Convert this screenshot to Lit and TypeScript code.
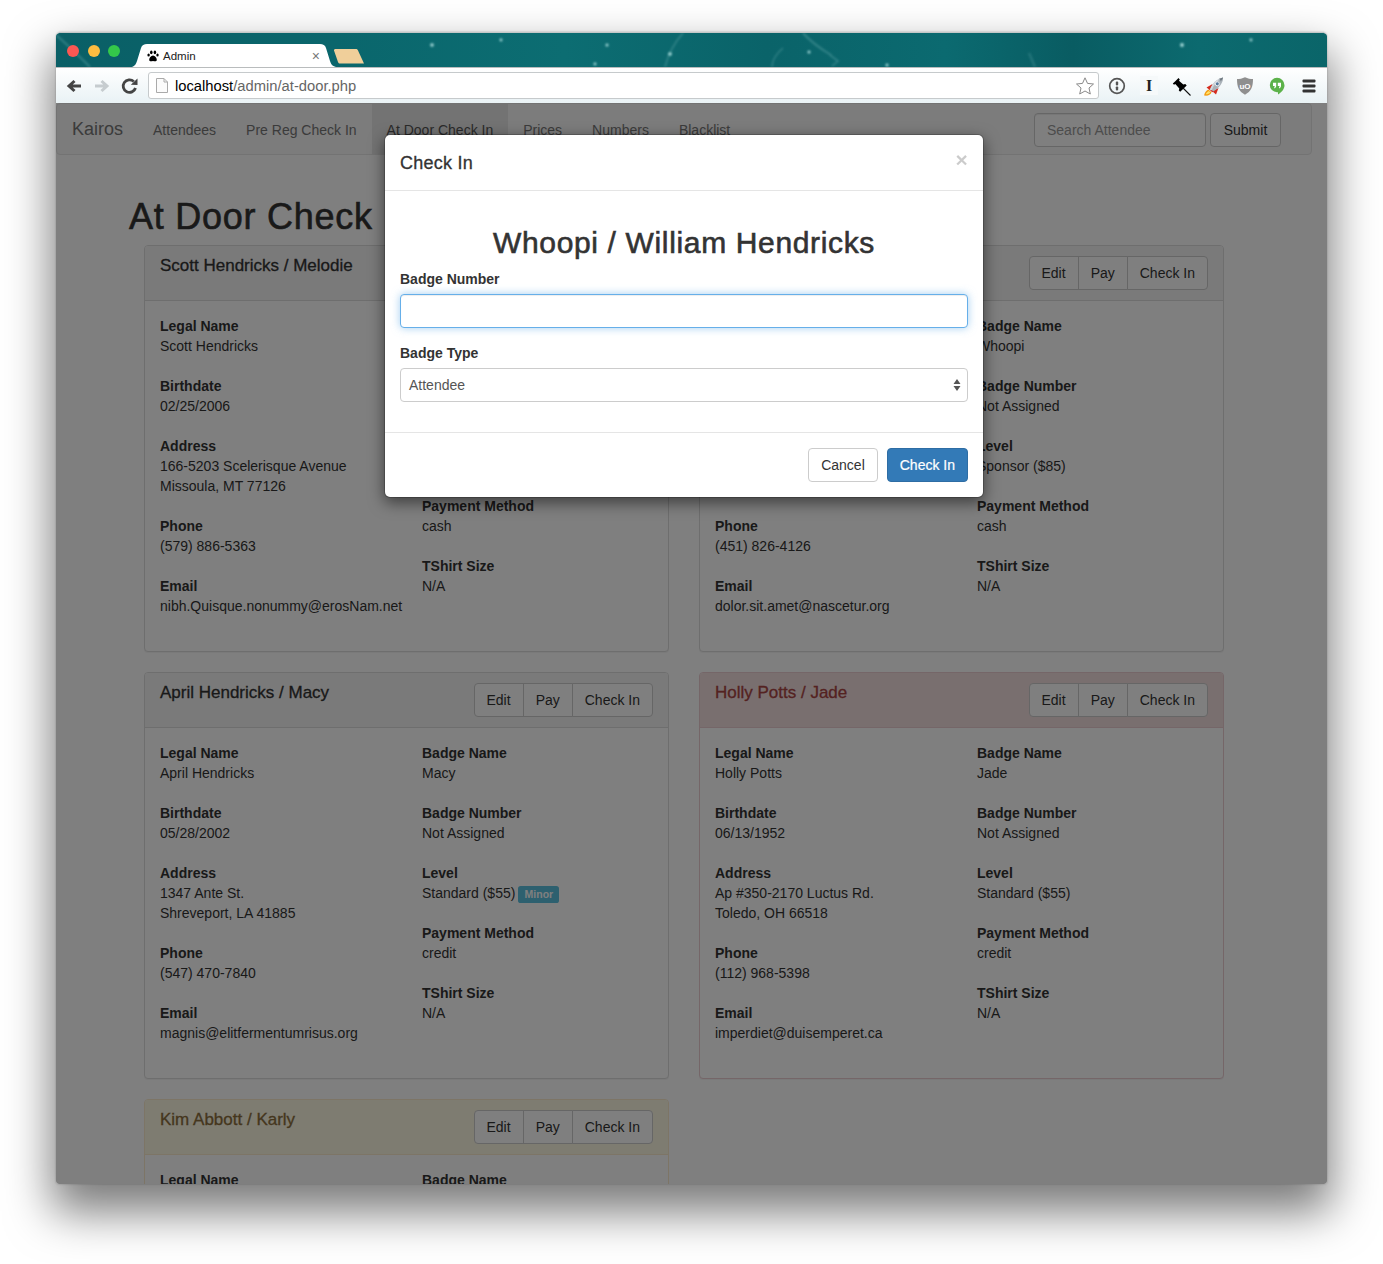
import { LitElement, html, css, svg } from 'lit';
import { customElement } from 'lit/decorators.js';

interface Person {
  title: string;
  tone?: 'danger' | 'warning';
  legal: string;
  birth: string;
  addr: string[];
  phone: string;
  email: string;
  badge: string;
  level: string;
  minor?: boolean;
  payment: string;
}

const PEOPLE: Person[] = [
  {
    title: 'Scott Hendricks / Melodie', legal: 'Scott Hendricks', birth: '02/25/2006',
    addr: ['166-5203 Scelerisque Avenue', 'Missoula, MT 77126'], phone: '(579) 886-5363',
    email: 'nibh.Quisque.nonummy@erosNam.net', badge: 'Melodie', level: 'Standard ($55)', payment: 'cash',
  },
  {
    title: 'William Hendricks / Whoopi', legal: 'William Hendricks', birth: '11/02/1984',
    addr: ['166-5203 Scelerisque Avenue', 'Missoula, MT 77126'], phone: '(451) 826-4126',
    email: 'dolor.sit.amet@nascetur.org', badge: 'Whoopi', level: 'Sponsor ($85)', payment: 'cash',
  },
  {
    title: 'April Hendricks / Macy', legal: 'April Hendricks', birth: '05/28/2002',
    addr: ['1347 Ante St.', 'Shreveport, LA 41885'], phone: '(547) 470-7840',
    email: 'magnis@elitfermentumrisus.org', badge: 'Macy', level: 'Standard ($55)', minor: true, payment: 'credit',
  },
  {
    title: 'Holly Potts / Jade', tone: 'danger', legal: 'Holly Potts', birth: '06/13/1952',
    addr: ['Ap #350-2170 Luctus Rd.', 'Toledo, OH 66518'], phone: '(112) 968-5398',
    email: 'imperdiet@duisemperet.ca', badge: 'Jade', level: 'Standard ($55)', payment: 'credit',
  },
  {
    title: 'Kim Abbott / Karly', tone: 'warning', legal: 'Kim Abbott', birth: '09/17/1990',
    addr: ['812 Nunc Road', 'Billings, MT 59101'], phone: '(406) 555-0148',
    email: 'kim.abbott@example.org', badge: 'Karly', level: 'Standard ($55)', payment: 'credit',
  },
];

const NAV = ['Attendees', 'Pre Reg Check In', 'At Door Check In', 'Prices', 'Numbers', 'Blacklist'];

const STARS: [number, number, number][] = [
  [376, 12, 1.8], [445, 7, 1.4], [551, 12, 1.5], [614, 21, 1.8], [539, 31, 1.4], [753, 19, 1.5],
  [831, 32, 1.5], [1126, 12, 1.9], [1195, 7, 1.4],
];

// the nebula wallpaper behind the tabs, roughly
const stripArt = svg`
  <defs>
    <linearGradient id="sky" x1="0" x2="1" y1="0" y2="0">
      <stop offset="0" stop-color="#0a5f66"/>
      <stop offset=".22" stop-color="#0a666c"/>
      <stop offset=".4" stop-color="#0c6d72"/>
      <stop offset=".56" stop-color="#0a6369"/>
      <stop offset=".7" stop-color="#0b6a70"/>
      <stop offset=".8" stop-color="#095c62"/>
      <stop offset=".9" stop-color="#0c6a6f"/>
      <stop offset="1" stop-color="#0a6569"/>
    </linearGradient>
    <filter id="soft"><feGaussianBlur stdDeviation="0.9"/></filter>
  </defs>
  <rect width="1271" height="34" fill="url(#sky)"/>
  <g fill="none" stroke="#6fb0b2" stroke-opacity=".4" filter="url(#soft)">
    <path d="M627 0C618 10 612 22 609 34" stroke-width="1.6"/>
    <path d="M747 0C755 9 765 16 775 22" stroke-width="2"/>
    <path d="M727 15C720 21 716 27 716 34" stroke-width="1.4"/>
    <path d="M774 22L782 28L776 33" stroke-width="1.6"/>
    <path d="M0 2C12 12 22 22 34 34" stroke-width="2"/>
    <path d="M973 20L979 34" stroke-width="2.5" stroke-opacity=".25"/>
  </g>
  <g fill="#a6dada" filter="url(#soft)">
    ${STARS.map(([x, y, r]) => svg`<circle cx=${x} cy=${y} r=${r}/>`)}
  </g>
`;

const ICONS = {
  back: svg`<path d="M17 10H6M10.500 5L5 10l5.500 5" fill="none" stroke="#444" stroke-width="3"/>`,
  forward: svg`<path d="M3 10h11M9.500 5L15 10l-5.500 5" fill="none" stroke="#c6cccf" stroke-width="3"/>`,
  reload: svg`<path d="M15.500 12a6.300 6.300 0 1 1-1.700-6.500" fill="none" stroke="#444" stroke-width="2.800"/><path d="M10.800 8.800L17.500 9V2.500z" fill="#444"/>`,
  star: svg`<path d="M10 1.800l2.500 5.600 6 .6-4.500 4 1.300 6L10 15l-5.300 3 1.300-6-4.500-4 6-.6z" fill="#fff" stroke="#8a8a8a" stroke-width="1"/>`,
  onepass: svg`<circle cx="10" cy="10" r="7.300" fill="none" stroke="#555" stroke-width="1.700"/><rect x="8.800" y="5.600" width="2.400" height="3.800" rx=".8" fill="#555"/><rect x="8.800" y="10.400" width="2.400" height="4" rx=".8" fill="#555"/>`,
  pin: svg`<path d="M4 5.500L7.500 2l1.300 1.400-.8 1.300 4.300 3.700 2-.4 1.400 1.400-6.500 6.400-1.400-1.400.5-2L4.300 8 3 8.800 1.800 7.500z" fill="#000"/><path d="M12 12l7.500 7.500" stroke="#111" stroke-width="1.100"/>`,
  rocket: svg`
    <path d="M1 19.500c.8-3.500 2.500-5.500 4.500-6l3 3c-1 2.500-3.500 3.500-7.500 3z" fill="#f39c12"/>
    <path d="M2.800 18.300c.7-1.800 1.700-2.800 3.200-3.300l1.300 1.500c-.8 1.200-2.200 1.800-4.500 1.800z" fill="#ffe066"/>
    <path d="M3.500 11.500L9.500 8l-1.500 7zM13 18.500L15.500 12l-6.500 3z" fill="#d62c1f"/>
    <path d="M7 13.500C9.500 7 13.500 3 20.500 1.300c-1 7-5 11-11 14.800z" fill="#aab2b9"/>
    <path d="M7 13.500C9.500 7 13.500 3 20.500 1.300 15 4 11 8 8.500 15z" fill="#d2d7db"/>
    <path d="M15.500 2.900c1.700.1 2 1.200 2.200 2.600L20.500 1.300z" fill="#6f7880"/>
    <circle cx="14.300" cy="7.800" r="2" fill="#55789c" stroke="#f2f4f5" stroke-width=".9"/>
    <path d="M8 14.500l1.900 1.300" stroke="#d62c1f" stroke-width="1.300"/>
  `,
  shield: svg`
    <path d="M10 1.300c2.700 1.300 5.400 1.800 8 1.800 0 7.500-1.700 12.500-8 15.600C3.700 15.600 2 10.600 2 3.100c2.600 0 5.300-.5 8-1.800z" fill="#8f8f8f"/>
    <text x="10" y="12.800" text-anchor="middle" font-family="Liberation Sans, sans-serif" font-weight="700" font-size="8" fill="#fff">uO</text>
  `,
  hangouts: svg`
    <path d="M10 1.800a7.500 7.500 0 0 1 7.500 7.500c0 4-3.300 7.400-6.500 9.200v-2.300h-1a7.200 7.200 0 0 1 0-14.400z" fill="#5cb24a"/>
    <path d="M6 6.800h3.200v3.300c0 1.200-.8 2.200-1.900 2.400v-1.700c.4-.1.600-.4.600-.8H6zM10.800 6.800H14v3.300c0 1.200-.8 2.200-1.900 2.400v-1.700c.4-.1.600-.4.600-.8h-1.900z" fill="#fff"/>
  `,
  menu: svg`<g fill="#333"><rect x="3.500" y="3.500" width="13" height="3" rx="1"/><rect x="3.500" y="8.500" width="13" height="3" rx="1"/><rect x="3.500" y="13.500" width="13" height="3" rx="1"/></g>`,
};

@customElement('app-root')
export class AppRoot extends LitElement {
  static styles = css`
    :host {
      display: block;
      width: 1383px;
      height: 1264px;
      overflow: hidden;
      background: #fff;
      font-family: 'Liberation Sans', Arial, sans-serif;
      font-size: 14px;
      line-height: 20px;
      color: #333;
    }
    * { box-sizing: border-box; }

    .window {
      width: 1271px;
      margin: 32px 0 0 56px;
      border-radius: 5px 5px 3px 3px;
      box-shadow: 0 24px 46px 4px rgba(0, 0, 0, 0.52), 0 0 2px rgba(0, 0, 0, 0.3);
      position: relative;
    }

    /* browser chrome */
    .strip {
      height: 35px;
      border-top: 1px solid #c4c8c8;
      border-radius: 5px 5px 0 0;
      position: relative;
      overflow: hidden;
      display: flex;
      background: #0a666b;
    }
    .strip-art { position: absolute; left: 0; top: 0; }
    .lights {
      position: relative;
      display: flex;
      gap: 8.5px;
      padding: 12px 0 0 11px;
      width: 76px;
    }
    .light { width: 12px; height: 12px; border-radius: 50%; }
    .tab {
      position: relative;
      width: 204px;
      height: 23px;
      margin-top: 11px;
      padding: 0 0 0 15px;
      display: flex;
      align-items: center;
      font-size: 11.5px;
      color: #222;
    }
    .tab-shape { position: absolute; left: 0; top: 0; }
    .tab > span, .tab > .paw { position: relative; }
    .paw { width: 12px; height: 12px; margin-right: 4px; flex: none; }
    .tab-x { position: absolute !important; right: 16px; top: 2px; color: #777; font-size: 14px; }
    .newtab { position: relative; margin: 16px 0 0 -2px; }

    .toolbar {
      height: 36px;
      border-top: 1px solid #b9bcbd;
      display: flex;
      align-items: center;
      padding: 0 2px 0 3.5px;
      background: linear-gradient(#ffffff, #e9f2f5);
    }
    .tool { width: 28px; height: 24px; display: flex; align-items: center; justify-content: center; flex: none; }
    .ext { width: 32px; }
    .tool svg { width: 20px; height: 20px; display: block; }
    .serif-i {
      width: 18px;
      height: 19px;
      background: #f6f9fa;
      text-align: center;
      font: 700 16px/19px 'Liberation Serif', serif;
      color: #222;
    }
    .addr {
      flex: 1;
      height: 27px;
      margin: 0 2px 0 4.5px;
      border: 1px solid #c6cacc;
      border-radius: 3px;
      background: #fff;
      display: flex;
      align-items: center;
      padding-left: 7px;
      font-size: 14.75px;
      color: #666;
    }
    .addr b { font-weight: 400; color: #000; }
    .addr .doc { width: 12px; height: 15px; margin-right: 7px; flex: none; }
    .addr .star { margin-left: auto; margin-right: 3px; width: 20px; height: 20px; flex: none; }

    /* page */
    .content {
      position: relative;
      height: 1081px;
      overflow: hidden;
      background: #fff;
      border-radius: 0 0 3px 3px;
    }
    .navbar {
      width: 1256px;
      height: 52px;
      border: 1px solid #e7e7e7;
      border-radius: 4px;
      background: #f8f8f8;
      display: flex;
      align-items: stretch;
      padding-right: 30px;
    }
    .brand { padding: 15px; font-size: 18px; color: #777; }
    .nav-item { padding: 16px 15px 14px; color: #777; }
    .nav-item.active { background: #e7e7e7; color: #555; }
    .search { margin-left: auto; display: flex; align-items: center; gap: 4px; padding-top: 2px; }
    .search input {
      width: 172px;
      height: 34px;
      padding: 6px 12px;
      border: 1px solid #ccc;
      border-radius: 4px;
      font: inherit;
      box-shadow: inset 0 1px 1px rgba(0, 0, 0, 0.075);
    }
    .search .btn { width: 71px; }
    input::placeholder { color: #999; opacity: 1; }

    .btn {
      height: 34px;
      padding: 6px 12px;
      border: 1px solid #ccc;
      border-radius: 4px;
      background: #fff;
      color: #333;
      font: inherit;
      white-space: nowrap;
    }
    .btn.primary {
      background: #337ab7;
      border-color: #2e6da4;
      color: #fff;
      -webkit-text-stroke: 0.2px currentColor;
    }

    .main { padding-left: 73px; }
    h1 {
      margin: 42px 0 8px;
      font-size: 36px;
      line-height: 40px;
      font-weight: 500;
      letter-spacing: 0.75px;
      -webkit-text-stroke: 0.6px currentColor;
    }
    .cards {
      margin-left: 15px;
      width: 1080px;
      display: grid;
      grid-template-columns: 525px 525px;
      gap: 20px 30px;
      align-items: start;
    }
    .card {
      border: 1px solid #ddd;
      border-radius: 4px;
      background: #fff;
      box-shadow: 0 1px 1px rgba(0, 0, 0, 0.05);
    }
    .card-head {
      display: flex;
      justify-content: space-between;
      align-items: flex-start;
      padding: 10px 15px;
      background: #f5f5f5;
      border-bottom: 1px solid #ddd;
      border-radius: 3px 3px 0 0;
    }
    .card-head h3 {
      margin: 1px 0 0;
      font-size: 17px;
      line-height: 18px;
      font-weight: 500;
      -webkit-text-stroke: 0.3px currentColor;
    }
    .card.danger { border-color: #ebccd1; }
    .card.danger .card-head { background: #f2dede; border-color: #ebccd1; color: #a94442; }
    .card.warning { border-color: #faebcc; }
    .card.warning .card-head { background: #fcf8e3; border-color: #faebcc; color: #8a6d3b; }
    .group { display: flex; }
    .group .btn { border-radius: 0; margin-left: -1px; }
    .group .btn:first-child { border-radius: 4px 0 0 4px; margin-left: 0; }
    .group .btn:last-child { border-radius: 0 4px 4px 0; }
    .card-body {
      display: grid;
      grid-template-columns: 262px 1fr;
      padding: 15px;
    }
    .field { margin-bottom: 20px; }
    .field strong, .field span { display: block; }
    .field strong { font-weight: 700; }
    .field span.minor {
      display: inline;
      padding: 0.2em 0.6em 0.3em;
      margin-left: -1px;
      background: #5bc0de;
      border-radius: 0.25em;
      color: #fff;
      font-size: 10.5px;
      font-weight: 700;
      line-height: 1;
    }

    /* modal */
    .backdrop { position: absolute; inset: 0; background: rgba(0, 0, 0, 0.5); }
    .modal {
      position: absolute;
      left: 328px;
      top: 31px;
      width: 600px;
      border: 1px solid rgba(0, 0, 0, 0.2);
      border-radius: 6px;
      background: #fff;
      background-clip: padding-box;
      box-shadow: 0 5px 15px rgba(0, 0, 0, 0.5);
    }
    .modal-head {
      height: 56px;
      padding: 15px;
      border-bottom: 1px solid #e5e5e5;
      display: flex;
      justify-content: space-between;
      font-size: 18px;
      line-height: 26px;
      letter-spacing: 0.25px;
      -webkit-text-stroke: 0.3px currentColor;
    }
    .close {
      margin-top: -1px;
      font-size: 21px;
      line-height: 21px;
      font-weight: 700;
      color: #000;
      opacity: 0.2;
      -webkit-text-stroke: 0;
    }
    .modal-body { padding: 15px; }
    .modal-body h2 {
      margin: 20px 0 10px;
      font-size: 30px;
      line-height: 33px;
      font-weight: 500;
      text-align: center;
      letter-spacing: 0.65px;
      -webkit-text-stroke: 0.6px currentColor;
    }
    .modal-body label { display: block; font-weight: 700; margin-bottom: 5px; }
    .form-group { margin-bottom: 15px; }
    .form-input, .form-select {
      display: block;
      width: 100%;
      height: 34px;
      border-radius: 4px;
      font: inherit;
      background: #fff;
    }
    .form-input {
      border: 1px solid #66afe9;
      outline: 0;
      box-shadow: inset 0 1px 1px rgba(0, 0, 0, 0.075), 0 0 8px rgba(102, 175, 233, 0.6);
    }
    .form-select {
      border: 1px solid #ccc;
      padding: 6px 8px;
      color: #555;
      display: flex;
      justify-content: space-between;
      align-items: center;
    }
    .form-select svg { width: 8px; height: 14px; margin-right: -2px; }
    .modal-foot {
      padding: 15px;
      border-top: 1px solid #e5e5e5;
      display: flex;
      justify-content: flex-end;
      gap: 9px;
    }
  `;

  private _icon(body: unknown) {
    return html`<svg viewBox="0 0 20 20">${body}</svg>`;
  }

  private _field(label: string, ...lines: string[]) {
    return html`<div class="field"><strong>${label}</strong>${lines.map((l) => html`<span>${l}</span>`)}</div>`;
  }

  private _card(p: Person) {
    return html`
      <section class="card ${p.tone ?? ''}">
        <div class="card-head">
          <h3>${p.title}</h3>
          <div class="group">
            <button class="btn">Edit</button><button class="btn">Pay</button><button class="btn">Check In</button>
          </div>
        </div>
        <div class="card-body">
          <div>
            ${this._field('Legal Name', p.legal)}
            ${this._field('Birthdate', p.birth)}
            ${this._field('Address', ...p.addr)}
            ${this._field('Phone', p.phone)}
            ${this._field('Email', p.email)}
          </div>
          <div>
            ${this._field('Badge Name', p.badge)}
            ${this._field('Badge Number', 'Not Assigned')}
            <div class="field">
              <strong>Level</strong>
              <span>${p.level}${p.minor ? html` <span class="minor">Minor</span>` : ''}</span>
            </div>
            ${this._field('Payment Method', p.payment)}
            ${this._field('TShirt Size', 'N/A')}
          </div>
        </div>
      </section>
    `;
  }

  render() {
    return html`
      <div class="window">
        <div class="strip">
          <svg class="strip-art" width="1271" height="34" viewBox="0 0 1271 34">${stripArt}</svg>
          <div class="lights">
            <div class="light" style="background:#fc5753"></div>
            <div class="light" style="background:#fdbc40"></div>
            <div class="light" style="background:#34c84a"></div>
          </div>
          <div class="tab">
            <svg class="tab-shape" width="204" height="23" viewBox="0 0 204 23">
              <path d="M0 23C3 22 4 20 5 17L9 4C10 1 12 0 15 0H188C191 0 193 1 194 4L198 17C199 20 200 22 204 23Z" fill="#fff"/>
            </svg>
            <svg class="paw" viewBox="0 0 12 12">
              <g fill="#000">
                <ellipse cx="1.600" cy="5" rx="1.200" ry="1.600"/>
                <ellipse cx="4.300" cy="2.400" rx="1.300" ry="1.800"/>
                <ellipse cx="7.900" cy="2.400" rx="1.300" ry="1.800"/>
                <ellipse cx="10.500" cy="5" rx="1.200" ry="1.600"/>
                <path d="M6 5.500c2 0 3.800 2.300 3.800 4.200 0 1.700-1.800 1.700-3.800 1.200-2 .5-3.800.5-3.800-1.200C2.200 7.800 4 5.500 6 5.500z"/>
              </g>
            </svg>
            <span>Admin</span>
            <span class="tab-x">×</span>
          </div>
          <svg class="newtab" width="30" height="15" viewBox="0 0 30 15">
            <path d="M0 1.500C0 .5.500 0 1.500 0H22C23 0 23.500.5 24 1.500L30 14.500H6C5 14.500 4.500 14 4 13z" fill="#f0cf9a"/>
          </svg>
        </div>
        <div class="toolbar">
          <div class="tool">${this._icon(ICONS.back)}</div>
          <div class="tool">${this._icon(ICONS.forward)}</div>
          <div class="tool">${this._icon(ICONS.reload)}</div>
          <div class="addr">
            <svg class="doc" viewBox="0 0 12 15">
              <path d="M.5.500H8L11.500 4V14.500H.5z" fill="#fbfbfb" stroke="#aaa"/>
              <path d="M8 .5V4H11.500" fill="none" stroke="#aaa"/>
            </svg>
            <span><b>localhost</b>/admin/at-door.php</span>
            <svg class="star" viewBox="0 0 20 20">${ICONS.star}</svg>
          </div>
          <div class="tool ext">${this._icon(ICONS.onepass)}</div>
          <div class="tool ext"><div class="serif-i">I</div></div>
          <div class="tool ext">${this._icon(ICONS.pin)}</div>
          <div class="tool ext">${this._icon(ICONS.rocket)}</div>
          <div class="tool ext">${this._icon(ICONS.shield)}</div>
          <div class="tool ext">${this._icon(ICONS.hangouts)}</div>
          <div class="tool ext">${this._icon(ICONS.menu)}</div>
        </div>
        <div class="content">
          <nav class="navbar">
            <div class="brand">Kairos</div>
            ${NAV.map((n, i) => html`<div class="nav-item ${i === 2 ? 'active' : ''}">${n}</div>`)}
            <div class="search">
              <input placeholder="Search Attendee" />
              <button class="btn">Submit</button>
            </div>
          </nav>
          <main class="main">
            <h1>At Door Check In</h1>
            <div class="cards">${PEOPLE.map((p) => this._card(p))}</div>
          </main>
          <div class="backdrop"></div>
          <div class="modal">
            <div class="modal-head"><span>Check In</span><span class="close">×</span></div>
            <div class="modal-body">
              <h2>Whoopi / William Hendricks</h2>
              <div class="form-group">
                <label>Badge Number</label>
                <input class="form-input" />
              </div>
              <div class="form-group">
                <label>Badge Type</label>
                <div class="form-select">
                  <span>Attendee</span>
                  <svg viewBox="0 0 8 14"><path d="M4 1L7.500 6H.5zM4 13L.5 8H7.500z" fill="#555"/></svg>
                </div>
              </div>
            </div>
            <div class="modal-foot">
              <button class="btn">Cancel</button>
              <button class="btn primary">Check In</button>
            </div>
          </div>
        </div>
      </div>
    `;
  }
}

declare global {
  interface HTMLElementTagNameMap { 'app-root': AppRoot; }
}
